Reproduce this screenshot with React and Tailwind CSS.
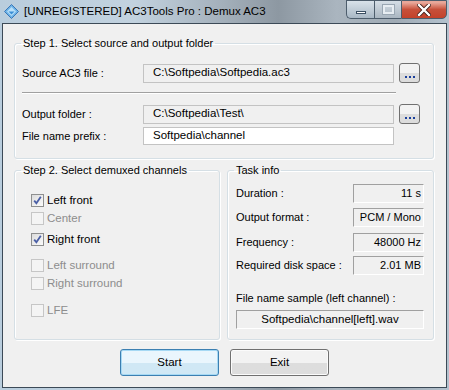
import React from "react";

const font = { fontFamily: "'Liberation Sans', Arial, sans-serif" };

function Check({ checked, disabled, label, className = "" }) {
  return (
    <div className={"flex items-center h-[13px] " + className}>
      <div
        className={
          "w-[13px] h-[13px] border flex items-center justify-center " +
          (disabled
            ? "border-[#c6c6c6] bg-[#f4f4f4]"
            : "border-[#8e8f8f] bg-gradient-to-br from-[#dcdcdc] to-[#fbfbfb]")
        }
      >
        {checked && (
          <svg width="9" height="9" viewBox="0 0 9 9">
            <path d="M1.2 4.6 L3.4 7.2 L7.8 0.8" fill="none" stroke="#4a5fa6" strokeWidth="1.8" />
          </svg>
        )}
      </div>
      <span className={"ml-[3px] whitespace-nowrap text-[11.5px] leading-[13px] " + (disabled ? "text-[#8d8d8d]" : "text-black")}>
        {label}
      </span>
    </div>
  );
}

function Field({ label, value, white, button, className = "" }) {
  return (
    <div className={"flex items-center h-[20px] " + className}>
      <div className="w-[121px] text-[11px] whitespace-nowrap">{label}</div>
      <div
        className={
          "w-[251px] border border-[#c3c3c3] flex items-center px-[9px] text-[11.5px] whitespace-nowrap " +
          (white ? "bg-white h-[18px]" : "bg-[#f0f0f0] h-[19px]")
        }
      >
        {value}
      </div>
      {button && (
        <div className="ml-[5px] w-[21px] h-[20px] rounded-[3px] border border-[#707070] bg-gradient-to-b from-[#f2f2f2] from-50% to-[#dcdcdc] to-50% flex items-end justify-center pb-[4px]">
          <div className="flex gap-[2px]">
            <span className="w-[2px] h-[2px] bg-[#1a3f9c]" />
            <span className="w-[2px] h-[2px] bg-[#1a3f9c]" />
            <span className="w-[2px] h-[2px] bg-[#1a3f9c]" />
          </div>
        </div>
      )}
    </div>
  );
}

function Info({ label, value, className = "" }) {
  return (
    <div className={"flex items-center " + className}>
      <div className="w-[117px] text-[11px] whitespace-nowrap">{label}</div>
      <div className="w-[71px] h-[19px] border-t border-l border-t-[#a0a0a0] border-l-[#a0a0a0] border-b border-r border-b-white border-r-white flex items-center justify-end pr-[2px] text-[11px] whitespace-nowrap">
        {value}
      </div>
    </div>
  );
}

export default function App() {
  return (
    <div className="w-[449px] h-[390px] flex flex-col overflow-hidden text-black" style={font}>
      <div className="w-[449px] h-[390px] flex flex-col bg-[linear-gradient(90deg,#b9cddd_0%,#c2d2df_30%,#a3afba_50%,#8d98a2_62%,#aab5bf_75%,#9faab4_88%,#b4c2ce_100%)]">
        {/* title bar */}
        <div className="h-[23px] flex items-start relative">
          <div className="mt-[4px] ml-[4px] w-[15px] h-[15px] flex items-center justify-center">
            <svg width="15" height="15" viewBox="0 0 15 15">
              <path d="M7.5 0.5 L14.5 7.5 L7.5 14.5 L0.5 7.5 Z" fill="#6eb3e6" stroke="#3a77b8" strokeWidth="1" />
              <path d="M7.5 3 L12 7.5 L7.5 12 L3 7.5 Z" fill="#b9e0fa" />
              <path d="M4.5 7.5 L7.5 10.5 L10.5 7.5" fill="#3c8fd6" />
            </svg>
          </div>
          <div className="ml-[5px] mt-[3px] text-[11.5px] leading-[16px] text-black whitespace-nowrap">
            [UNREGISTERED] AC3Tools Pro : Demux AC3
          </div>
          <div className="ml-auto mr-[2px] flex h-[19px]">
            <div className="w-[28px] h-[19px] border border-[#4d5d6c] border-r-0 rounded-bl-[5px] bg-gradient-to-b from-[#d9e2ea] to-[#a9b8c5] flex items-center justify-center">
              <div className="w-[10px] h-[3px] bg-white border border-[#3b4f63] mt-[5px]" />
            </div>
            <div className="w-[27px] h-[19px] border border-[#4d5d6c] border-r-0 bg-gradient-to-b from-[#d5dee6] to-[#aab6c1] flex items-center justify-center">
              <div className="w-[11px] h-[9px] border-2 border-[#e7edf2] outline outline-1 outline-[#9aa7b3]" />
            </div>
            <div className="w-[46px] h-[19px] border border-[#4d5d6c] rounded-br-[5px] bg-gradient-to-b from-[#e8a799] from-10% via-[#c7503a] via-50% to-[#c4422a] flex items-center justify-center">
              <svg width="14" height="12" viewBox="0 0 14 12">
                <path d="M2 1 L12 11 M12 1 L2 11" stroke="#3b1a14" strokeWidth="4" strokeLinecap="square" />
                <path d="M2 1 L12 11 M12 1 L2 11" stroke="#ffffff" strokeWidth="2.4" strokeLinecap="square" />
              </svg>
            </div>
          </div>
        </div>

        {/* client */}
        <div className="mx-[2px] w-[445px] h-[365px] border border-[#3c4a57] bg-[#f0f0f0] flex flex-col">
          <fieldset className="mt-[12px] ml-[11px] w-[420px] border border-[#d5dfe5] rounded-[3px] shadow-[inset_1px_1px_0_#ffffff,1px_1px_0_#ffffff]">
            <legend className="ml-[6px] px-[2px] text-[11px] leading-[14px] whitespace-nowrap">Step 1. Select source and output folder</legend>
            <div className="pl-[7px] pb-[12px] flex flex-col">
              <Field className="mt-[13px]" label="Source AC3 file :" value="C:\Softpedia\Softpedia.ac3" button />
              <div className="mt-[9px] w-[374px] h-[2px] border-t border-[#a0a0a0] border-b border-b-white" />
              <Field className="mt-[10px]" label="Output folder :" value="C:\Softpedia\Test\" button />
              <Field className="mt-[2px]" label="File name prefix :" value="Softpedia\channel" white />
            </div>
          </fieldset>

          <div className="mt-[4px] ml-[11px] flex gap-[7px]">
            <fieldset className="w-[206px] h-[177px] border border-[#d5dfe5] rounded-[3px] shadow-[inset_1px_1px_0_#ffffff,1px_1px_0_#ffffff]">
              <legend className="ml-[6px] px-[2px] text-[11px] leading-[14px] whitespace-nowrap">Step 2. Select demuxed channels</legend>
              <div className="pl-[16px] flex flex-col">
                <Check className="mt-[17px]" checked label="Left front" />
                <Check className="mt-[5px]" disabled label="Center" />
                <Check className="mt-[8px]" checked label="Right front" />
                <Check className="mt-[13px]" disabled label="Left surround" />
                <Check className="mt-[5px]" disabled label="Right surround" />
                <Check className="mt-[14px]" disabled label="LFE" />
              </div>
            </fieldset>
            <fieldset className="w-[207px] h-[177px] border border-[#d5dfe5] rounded-[3px] shadow-[inset_1px_1px_0_#ffffff,1px_1px_0_#ffffff]">
              <legend className="ml-[6px] px-[2px] text-[11px] leading-[14px] whitespace-nowrap">Task info</legend>
              <div className="pl-[8px] flex flex-col">
                <Info className="mt-[7px]" label="Duration :" value="11 s" />
                <Info className="mt-[5px]" label="Output format :" value="PCM / Mono" />
                <Info className="mt-[6px]" label="Frequency :" value="48000 Hz" />
                <Info className="mt-[4px]" label="Required disk space :" value="2.01 MB" />
                <div className="mt-[16px] text-[11px] leading-[14px] whitespace-nowrap">File name sample (left channel) :</div>
                <div className="mt-[5px] w-[188px] h-[19px] border-t border-l border-t-[#a0a0a0] border-l-[#a0a0a0] border-b border-r border-b-white border-r-white flex items-center justify-center text-[11.5px] whitespace-nowrap">
                  Softpedia\channel[left].wav
                </div>
              </div>
            </fieldset>
          </div>

          <div className="mt-[9px] flex gap-[11px] pl-[117px]">
            <button className="w-[99px] h-[27px] rounded-[3px] border border-[#3c7fb1] shadow-[inset_0_0_0_1px_#a6d9f4] bg-gradient-to-b from-[#eaf6fd] from-50% to-[#d0e8f5] to-50% text-[11.5px]">
              Start
            </button>
            <button className="w-[99px] h-[27px] rounded-[3px] border border-[#707070] shadow-[inset_0_0_0_1px_#fbfbfb] bg-gradient-to-b from-[#f2f2f2] from-50% to-[#dddddd] to-50% text-[11.5px]">
              Exit
            </button>
          </div>
        </div>
      </div>
    </div>
  );
}
